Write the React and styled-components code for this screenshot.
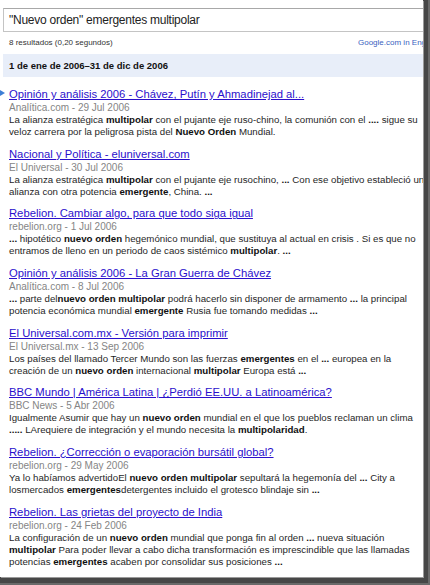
import React from "react";
import styled, { createGlobalStyle } from "styled-components";

const Global = createGlobalStyle`
  html, body { margin: 0; padding: 0; background: #fff; }
  body { font-family: Arial, "Liberation Sans", sans-serif; }
`;

const Outer = styled.div`
  width: 430px;
  height: 585px;
  background: #474747;
  box-shadow: inset -2px -2px 0 #6a6a6a;
  display: flex;
  align-items: flex-start;
`;

const Shot = styled.div`
  position: relative;
  width: 423px;
  height: 577px;
  background: #fff;
  overflow: hidden;
  font-family: "Liberation Sans", Arial, sans-serif;
  box-shadow: 1px 1px 0 #9a9a9a;
`;

const SearchBox = styled.div`
  margin: 8px 0 0 3px;
  width: 440px;
  height: 24px;
  box-sizing: border-box;
  border: 1px solid #c4c4c4;
  border-top-color: #a8a8a8;
  padding: 0 0 0 5px;
  display: flex;
  align-items: center;
  font-size: 12px;
  letter-spacing: -0.25px;
  color: #222;
  white-space: nowrap;
`;

const Stats = styled.div`
  display: flex;
  justify-content: space-between;
  align-items: center;
  height: 20px;
  padding: 0 0 0 9px;
  font-size: 8px;
  color: #333;
  white-space: nowrap;
`;

const StatsLink = styled.span`
  color: #3b5fc0;
  width: 65px;
  overflow: hidden;
`;

const DateBar = styled.div`
  margin: 2px 0 0 3px;
  height: 23px;
  background: #e8eef9;
  display: flex;
  align-items: center;
  padding-left: 6px;
  font-size: 9.5px;
  font-weight: bold;
  color: #111;
`;

const Results = styled.ol`
  list-style: none;
  margin: 10px 0 0 0;
  padding: 0 0 0 9px;
  display: flex;
  flex-direction: column;
  gap: 8.7px;
`;

const Result = styled.li`
  position: relative;
  white-space: nowrap;
`;

const Marker = styled.span`
  position: absolute;
  left: -9px;
  top: 3px;
  width: 0;
  height: 0;
  border-top: 3px solid transparent;
  border-bottom: 3px solid transparent;
  border-left: 5px solid #3d7fd6;
`;

const Title = styled.a`
  display: block;
  height: 14px;
  line-height: 14px;
  font-size: 11.25px;
  color: #2a0fcc;
  text-decoration: underline;
`;

const Source = styled.div`
  height: 13px;
  line-height: 13px;
  font-size: 10px;
  color: #858585;
`;

const Snippet = styled.div`
  line-height: 12px;
  font-size: 9.7px;
  color: #1f1f1f;
  b { color: #111; }
`;

const data = [
  {
    title: "Opinión y análisis 2006 - Chávez, Putín y Ahmadinejad al...",
    source: "Analítica.com - 29 Jul 2006",
    marker: true,
    snippet: (
      <>
        La alianza estratégica <b>multipolar</b> con el pujante eje ruso-chino, la comunión con el <b>....</b> sigue su
        <br />
        veloz carrera por la peligrosa pista del <b>Nuevo Orden</b> Mundial.
      </>
    ),
  },
  {
    title: "Nacional y Política - eluniversal.com",
    source: "El Universal - 30 Jul 2006",
    snippet: (
      <>
        La alianza estratégica <b>multipolar</b> con el pujante eje rusochino, <b>...</b> Con ese objetivo estableció una
        <br />
        alianza con otra potencia <b>emergente</b>, China. <b>...</b>
      </>
    ),
  },
  {
    title: "Rebelion. Cambiar algo, para que todo siga igual",
    source: "rebelion.org - 1 Jul 2006",
    snippet: (
      <>
        <b>...</b> hipotético <b>nuevo orden</b> hegemónico mundial, que sustituya al actual en crisis . Si es que no
        <br />
        entramos de lleno en un periodo de caos sistémico <b>multipolar</b>. <b>...</b>
      </>
    ),
  },
  {
    title: "Opinión y análisis 2006 - La Gran Guerra de Chávez",
    source: "Analítica.com - 8 Jul 2006",
    snippet: (
      <>
        <b>...</b> parte del<b>nuevo orden multipolar</b> podrá hacerlo sin disponer de armamento <b>...</b> la principal
        <br />
        potencia económica mundial <b>emergente</b> Rusia fue tomando medidas <b>...</b>
      </>
    ),
  },
  {
    title: "El Universal.com.mx - Versión para imprimir",
    source: "El Universal.mx - 13 Sep 2006",
    snippet: (
      <>
        Los países del llamado Tercer Mundo son las fuerzas <b>emergentes</b> en el <b>...</b> europea en la
        <br />
        creación de un <b>nuevo orden</b> internacional <b>multipolar</b> Europa está <b>...</b>
      </>
    ),
  },
  {
    title: "BBC Mundo | América Latina | ¿Perdió EE.UU. a Latinoamérica?",
    source: "BBC News - 5 Abr 2006",
    snippet: (
      <>
        Igualmente Asumir que hay un <b>nuevo orden</b> mundial en el que los pueblos reclaman un clima
        <br />
        <b>.....</b> LArequiere de integración y el mundo necesita la <b>multipolaridad</b>.
      </>
    ),
  },
  {
    title: "Rebelion. ¿Corrección o evaporación bursátil global?",
    source: "rebelion.org - 29 May 2006",
    snippet: (
      <>
        Ya lo habíamos advertidoEl <b>nuevo orden multipolar</b> sepultará la hegemonía del <b>...</b> City a
        <br />
        losmercados <b>emergentes</b>detergentes incluido el grotesco blindaje sin <b>...</b>
      </>
    ),
  },
  {
    title: "Rebelion. Las grietas del proyecto de India",
    source: "rebelion.org - 24 Feb 2006",
    snippet: (
      <>
        La configuración de un <b>nuevo orden</b> mundial que ponga fin al orden <b>...</b> nueva situación
        <br />
        <b>multipolar</b> Para poder llevar a cabo dicha transformación es imprescindible que las llamadas
        <br />
        potencias <b>emergentes</b> acaben por consolidar sus posiciones <b>...</b>
      </>
    ),
  },
];

export default function App() {
  return (
    <>
      <Global />
      <Outer>
        <Shot>
          <SearchBox>"Nuevo orden" emergentes multipolar</SearchBox>
          <Stats>
            <span>8 resultados (0,20 segundos)</span>
            <StatsLink>Google.com in English</StatsLink>
          </Stats>
          <DateBar>1 de ene de 2006–31 de dic de 2006</DateBar>
          <Results>
            {data.map((r, i) => (
              <Result key={i}>
                {r.marker && <Marker />}
                <Title href="#">{r.title}</Title>
                <Source>{r.source}</Source>
                <Snippet>{r.snippet}</Snippet>
              </Result>
            ))}
          </Results>
        </Shot>
      </Outer>
    </>
  );
}
